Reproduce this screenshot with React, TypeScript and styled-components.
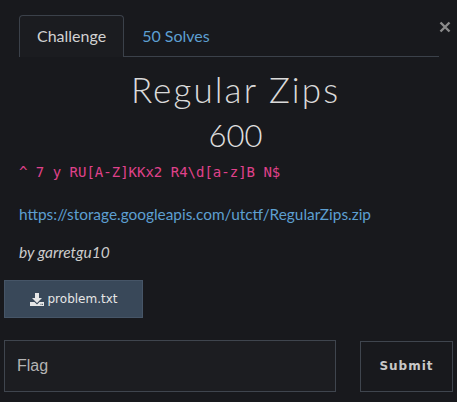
import React from "react";
import styled, { createGlobalStyle } from "styled-components";

const Global = createGlobalStyle`
  html, body { margin: 0; padding: 0; background: #18191d; }
  body { font-family: Lato, "Open Sans", sans-serif; color: #d0d0d0; }
  * { box-sizing: border-box; }
`;

const Page = styled.div`
  width: 457px;
  height: 402px;
  background: #18191d;
  position: relative;
  overflow: hidden;
`;

const Close = styled.button`
  position: absolute;
  top: 17px;
  right: 4px;
  background: none;
  border: none;
  padding: 0;
  width: 16px;
  height: 20px;
  display: flex;
  align-items: center;
  justify-content: center;
  cursor: pointer;
`;

const Body = styled.div`
  padding: 15px 5px 0 19px;
`;

const Tabs = styled.div`
  display: flex;
  width: 420px;
  border-bottom: 1px solid #3b414a;
  height: 42px;
`;

const Tab = styled.div<{ $active?: boolean }>`
  height: 42px;
  padding: 0 17px;
  display: flex;
  align-items: center;
  padding-bottom: 2px;
  font-size: 16px;
  color: ${(p) => (p.$active ? "#d2d2d2" : "#5d9fd1")};
  border: 1px solid ${(p) => (p.$active ? "#3b414a" : "transparent")};
  border-bottom: none;
  border-radius: 4px 4px 0 0;
  background: ${(p) => (p.$active ? "#1b1c20" : "transparent")};
  margin-bottom: -1px;
`;

const Title = styled.h1`
  margin: 12px 0 0;
  text-align: center;
  font-family: Lato, sans-serif;
  font-weight: 300;
  font-size: 35px;
  letter-spacing: 2.1px;
  line-height: 40px;
  color: #dadada;
`;

const Points = styled.div`
  margin-top: 8px;
  text-align: center;
  font-family: Lato, sans-serif;
  font-weight: 300;
  font-size: 31px;
  line-height: 36px;
  color: #e0e0e0;
`;

const Code = styled.div`
  margin-top: 11px;
  font-family: "DejaVu Sans Mono", monospace;
  font-size: 14px;
  line-height: 16px;
  color: #e0428c;
  white-space: pre;
`;

const Link = styled.a`
  display: block;
  margin-top: 24px;
  font-size: 15.4px;
  line-height: 20px;
  color: #5d9fd1;
  text-decoration: none;
`;

const Author = styled.div`
  margin-top: 18px;
  font-style: italic;
  font-size: 15.5px;
  line-height: 20px;
  color: #cccccc;
`;

const Lower = styled.div`
  padding: 0 4px;
`;

const FileButton = styled.button`
  margin-top: 18px;
  width: 139px;
  height: 38px;
  background: #394859;
  border: 1px solid #465567;
  border-radius: 0;
  color: #e6e6e6;
  font-family: "DejaVu Sans", sans-serif;
  font-size: 12px;
  display: flex;
  align-items: center;
  justify-content: center;
  gap: 4px;
`;

const FormRow = styled.div`
  margin-top: 22px;
  display: flex;
  align-items: center;
  gap: 24px;
`;

const FlagInput = styled.input`
  width: 332px;
  height: 52px;
  background: #1c1d21;
  border: 1px solid #3f454e;
  border-radius: 0;
  padding: 0 12px;
  font-family: "Liberation Sans", Arial, sans-serif;
  font-size: 16px;
  color: #ddd;
  outline: none;
  &::placeholder { color: #b4b4b4; }
`;

const Submit = styled.button`
  width: 93px;
  height: 51px;
  background: #18191d;
  border: 1px solid #3f454e;
  border-radius: 0;
  color: #c8c8c8;
  font-family: "DejaVu Sans", sans-serif;
  font-weight: bold;
  font-size: 12px;
  letter-spacing: 1px;
`;

const Icon = styled.svg`
  display: block;
`;

export default function App() {
  return (
    <>
      <Global />
      <Page>
        <Close aria-label="close">
          <Icon width="12" height="12" viewBox="0 0 12 12">
            <path d="M1.5 1.5 L10.5 10.5 M10.5 1.5 L1.5 10.5" stroke="#8a8a8a" strokeWidth="2.4" strokeLinecap="butt" />
          </Icon>
        </Close>
        <Body>
          <Tabs>
            <Tab $active>Challenge</Tab>
            <Tab>50 Solves</Tab>
          </Tabs>
          <Title>Regular Zips</Title>
          <Points>600</Points>
          <Code>{"^ 7 y RU[A-Z]KKx2 R4\\d[a-z]B N$"}</Code>
          <Link href="#">https://storage.googleapis.com/utctf/RegularZips.zip</Link>
          <Author>by garretgu10</Author>
        </Body>
        <Lower>
          <FileButton>
            <Icon width="14" height="13" viewBox="0 0 14 13">
              <path d="M5 0h4v5h3l-5 5-5-5h3z" fill="#e6e6e6" />
              <path d="M0 9h4.5l2.5 2.5L9.5 9H14v4H0z" fill="#e6e6e6" />
              <rect x="10.5" y="10.8" width="1" height="1" fill="#394859" />
              <rect x="12" y="10.8" width="1" height="1" fill="#394859" />
            </Icon>
            problem.txt
          </FileButton>
          <FormRow>
            <FlagInput placeholder="Flag" />
            <Submit>Submit</Submit>
          </FormRow>
        </Lower>
      </Page>
    </>
  );
}
